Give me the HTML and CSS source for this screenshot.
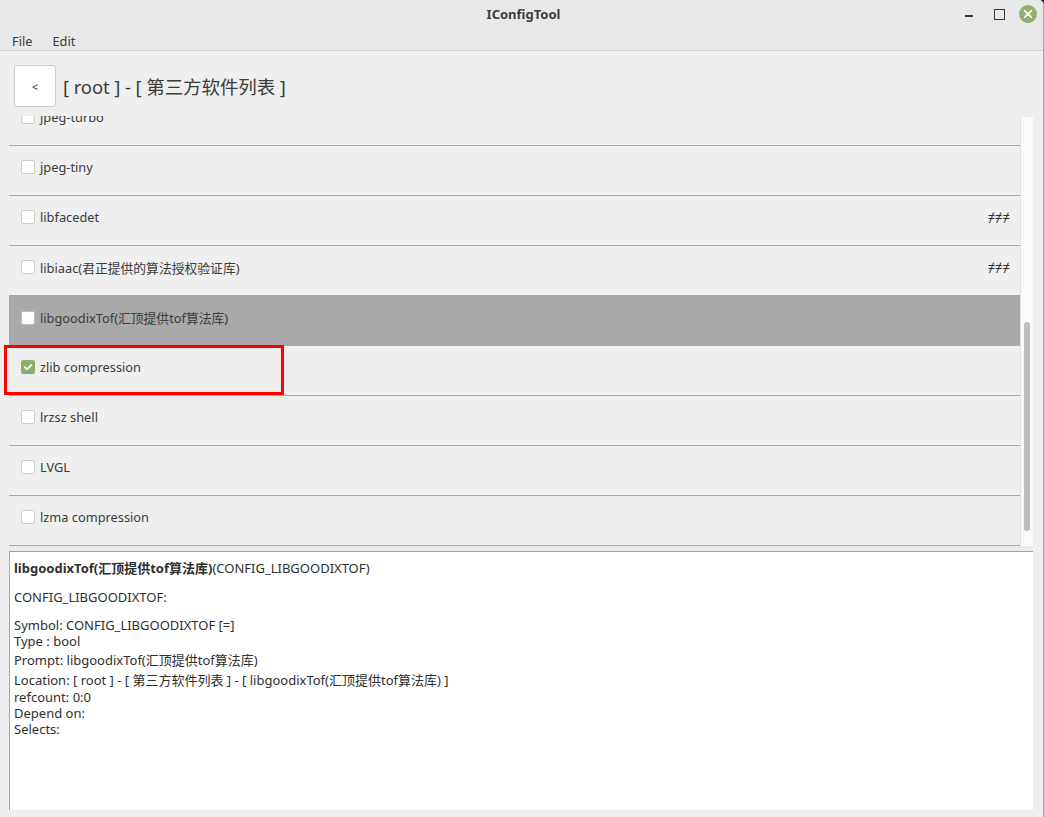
FILE: index.html
```html
<!DOCTYPE html>
<html lang="zh-CN">
<head>
<meta charset="utf-8">
<title>IConfigTool</title>
<link rel="stylesheet" href="styles.css">
</head>
<body>
<div class="window">
  <header class="titlebar">
    <div class="title">IConfigTool</div>
    <div class="controls">
      <span class="ctl ctl-min"></span>
      <span class="ctl ctl-max"></span>
      <span class="ctl ctl-close">
        <svg width="18" height="18" viewBox="0 0 18 18"><circle cx="9" cy="9" r="9" fill="#8fb06c"/><path d="M5.6 5.6 L12.4 12.4 M12.4 5.6 L5.6 12.4" stroke="#fff" stroke-width="1.6" stroke-linecap="round"/></svg>
      </span>
    </div>
  </header>
  <nav class="menubar">
    <span class="menu-item">File</span>
    <span class="menu-item">Edit</span>
  </nav>
  <main class="content">
    <div class="crumb">
      <button class="back">&lt;</button>
      <div class="crumb-title">[ root ] - [ 第三方软件列表 ]</div>
    </div>
    <div class="listarea">
      <div class="list">
        <div class="rows">
          <div class="row"><span class="cb"></span><span class="label">jpeg-turbo</span></div>
          <div class="row"><span class="cb"></span><span class="label">jpeg-tiny</span></div>
          <div class="row"><span class="cb"></span><span class="label">libfacedet</span><span class="flag">≠≠≠</span></div>
          <div class="row"><span class="cb"></span><span class="label">libiaac(君正提供的算法授权验证库)</span><span class="flag">≠≠≠</span></div>
          <div class="row selected"><span class="cb"></span><span class="label">libgoodixTof(汇顶提供tof算法库)</span></div>
          <div class="row"><span class="cb checked"><svg width="10" height="10" viewBox="0 0 10 10"><path d="M1.8 5.2 L4 7.3 L8.3 2.8" fill="none" stroke="#fff" stroke-width="1.7" stroke-linecap="round" stroke-linejoin="round"/></svg></span><span class="label">zlib compression</span></div>
          <div class="row"><span class="cb"></span><span class="label">lrzsz shell</span></div>
          <div class="row"><span class="cb"></span><span class="label">LVGL</span></div>
          <div class="row"><span class="cb"></span><span class="label">lzma compression</span></div>
          <div class="row end"></div>
        </div>
      </div>
      <div class="scrollbar"><div class="thumb"></div></div>
    </div>
    <div class="splitter"></div>
    <div class="details">
      <div class="d-line first"><b>libgoodixTof(汇顶提供tof算法库)</b>(CONFIG_LIBGOODIXTOF)</div>
      <div class="d-line gap-a">CONFIG_LIBGOODIXTOF:</div>
      <div class="d-line gap-b">Symbol: CONFIG_LIBGOODIXTOF [=]</div>
      <div class="d-line">Type : bool</div>
      <div class="d-line gap-c">Prompt: libgoodixTof(汇顶提供tof算法库)</div>
      <div class="d-line gap-c tall">Location: [ root ] - [ 第三方软件列表 ] - [ libgoodixTof(汇顶提供tof算法库) ]</div>
      <div class="d-line">refcount: 0:0</div>
      <div class="d-line">Depend on:</div>
      <div class="d-line">Selects:</div>
    </div>
  </main>
  <div class="annotation"></div>
</div>
</body>
</html>
```

FILE: styles.css
```css
* { box-sizing: border-box; }
html, body {
  margin: 0;
  padding: 0;
  background: #2b2b2b;
}
body {
  width: 1044px;
  height: 817px;
  overflow: hidden;
  font-family: "Noto Sans", "Noto Sans CJK SC", sans-serif;
  color: #3c3c3c;
}
.window {
  position: relative;
  width: 1044px;
  height: 817px;
  background: #efefef;
  border-right: 1px solid #a6a6a6;
  border-top-right-radius: 5px;
  overflow: hidden;
  display: flex;
  flex-direction: column;
}
.titlebar {
  height: 29px;
  background: #e8e8e8;
  display: flex;
  align-items: center;
  justify-content: center;
  position: relative;
  padding-bottom: 2px;
}
.title {
  font-size: 13px;
  font-weight: bold;
  color: #3d3d3d;
  padding-left: 4px;
}
.controls {
  position: absolute;
  right: 6px;
  top: 5px;
  display: flex;
  align-items: center;
  gap: 0;
}
.ctl {
  display: flex;
  align-items: center;
  justify-content: center;
  width: 31px;
  height: 18px;
  position: relative;
}
.ctl-min::before {
  content: "";
  display: block;
  width: 8px;
  height: 1.5px;
  background: #3a3a3a;
  margin-top: 4px;
}
.ctl-max::before {
  content: "";
  display: block;
  width: 9px;
  height: 9px;
  border: 1.4px solid #3a3a3a;
}
.ctl-close { width: 18px; margin-left: 4px; }
.ctl-close svg { display: block; }

.menubar {
  height: 22px;
  background: #e8e8e8;
  border-bottom: 1px solid #d2d2d2;
  display: flex;
  align-items: center;
  padding-left: 12px;
  gap: 20px;
  font-size: 12.8px;
  color: #3c3c3c;
  padding-top: 2px;
}

.content {
  flex: 1;
  display: flex;
  flex-direction: column;
  padding: 0 10px 7px 9px;
  min-height: 0;
}
.crumb {
  height: 65px;
  display: flex;
  align-items: flex-start;
  padding-top: 14px;
  padding-left: 5px;
  gap: 7px;
}
.back {
  width: 42px;
  height: 42px;
  background: #ffffff;
  border: 1px solid #cbcbcb;
  border-radius: 3px;
  font-family: "Noto Sans", sans-serif;
  font-size: 11px;
  color: #333;
  padding: 0;
  margin: 0;
}
.crumb-title {
  font-size: 18.5px;
  color: #3a3a3a;
  line-height: 42px;
  letter-spacing: -0.1px;
  padding-top: 1px;
}

.listarea {
  height: 430px;
  display: flex;
}
.list {
  flex: 1;
  overflow: hidden;
}
.rows {
  margin-top: -21px;
}
.row {
  height: 50px;
  border-top: 1px solid #a9a9a9;
  display: flex;
  align-items: center;
  padding: 0 10px 7px 12px;
  font-size: 12.8px;
  color: #3c3c3c;
}
.row:first-child { border-top-color: transparent; }
.row.selected {
  background: #a9a9a9;
  border-top-color: #a9a9a9;
  height: 51px;
  margin-bottom: -1px;
  position: relative;
}
.row.end { height: 1px; padding: 0; }
.cb {
  width: 14px;
  height: 14px;
  background: #ffffff;
  border: 1px solid #cdcdcd;
  border-radius: 2px;
  display: flex;
  align-items: center;
  justify-content: center;
  flex: none;
  margin-right: 5px;
}
.selected .cb { border-color: #bdbdbd; }
.cb.checked {
  background: #8cae69;
  border-color: #8cae69;
}
.cb.checked svg { display: block; }
.label { flex: 1; white-space: nowrap; }
.flag {
  font-size: 13px;
  color: #2e2e2e;
  letter-spacing: 0;
}

.scrollbar {
  width: 13px;
  margin-top: 1px;
  background: #fbfbfb;
  border-left: 1px solid #dedede;
  display: flex;
  justify-content: center;
}
.thumb {
  width: 6px;
  height: 209px;
  margin-top: 205px;
  margin-left: -1px;
  background: #bcbcbc;
  border-radius: 3px;
}

.splitter {
  height: 5px;
  background-color: #ececec;
  background-image: radial-gradient(circle, #dadada 0.7px, transparent 0.9px);
  background-size: 3px 3px;
}
.details {
  flex: 1;
  background: #ffffff;
  border-top: 1px solid #a4a4a4;
  border-left: 1px solid #a4a4a4;
  padding: 8px 0 0 4px;
  font-size: 13px;
  color: #2f2f2f;
}
.d-line {
  line-height: 16px;
  white-space: nowrap;
}
.d-line b { font-weight: bold; }
.gap-a { margin-top: 13px; }
.gap-b { margin-top: 12px; }
.gap-c { margin-top: 3px; }
.tall { line-height: 18px; margin-top: 3px; }

.annotation {
  position: absolute;
  left: 4px;
  top: 345px;
  width: 280px;
  height: 50px;
  border: 3px solid #ff0000;
  pointer-events: none;
}
```
